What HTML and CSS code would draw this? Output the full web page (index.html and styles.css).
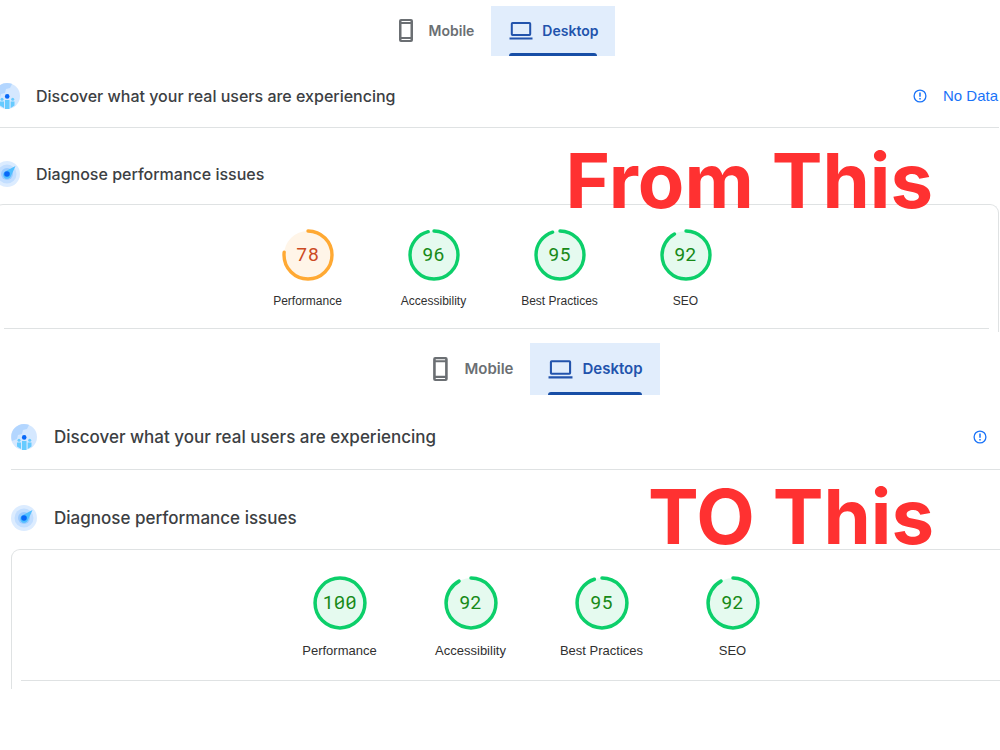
FILE: index.html
```
<!DOCTYPE html>
<html lang="en">
<head>
<meta charset="utf-8">
<meta name="viewport" content="width=device-width, initial-scale=1">
<title>PageSpeed comparison</title>
<link rel="stylesheet" href="styles.css">
</head>
<body>
<svg class="sprite" aria-hidden="true">
  <symbol id="phone" viewBox="0 0 24 24">
    <path d="M6 1h9a2 2 0 0 1 2 2v19a2 2 0 0 1-2 2H5a2 2 0 0 1-2-2V3a2 2 0 0 1 2-2zm-.5 5v13h9V6zm0-3v1h9V3zm0 18v1h9v-1z" fill="currentColor" fill-rule="evenodd"/>
  </symbol>
  <symbol id="laptop" viewBox="0 0 24 24">
    <path d="M3.500 4h17A1.700 1.700 0 0 1 22.200 5.700v10.600a1.700 1.700 0 0 1-1.700 1.700h-17a1.700 1.700 0 0 1-1.700-1.700V5.700A1.700 1.700 0 0 1 3.500 4zm.3 2v10h16.400V6zM.5 19.500h23v2H.5z" fill="currentColor" fill-rule="evenodd"/>
  </symbol>
  <symbol id="users" viewBox="0 0 26 26">
    <circle cx="13" cy="13" r="13" fill="#d5e8ff"/>
    <path d="M1 17C-2 8 5 0 13 0c3 0 5 1 5 1l-2 4-4 1-1 4-4 1-1 4z" fill="#b3d6ff"/>
    <path d="M6 18.500h4V25l-4-2.500zM11 17h4.500v9H11zM16.700 18.500h3.800v4L16.700 25z" fill="#67cbff"/>
    <circle cx="8" cy="16.300" r="1.500" fill="#67cbff"/><circle cx="18.700" cy="16.300" r="1.500" fill="#67cbff"/>
    <circle cx="13.200" cy="13.400" r="2.300" fill="#0868f7"/>
  </symbol>
  <symbol id="radar" viewBox="0 0 26 26">
    <circle cx="13" cy="13" r="13" fill="#dcecff"/>
    <circle cx="13" cy="13" r="9.500" fill="#c2deff"/>
    <circle cx="13" cy="13" r="6" fill="#9bcbff"/>
    <path d="M21.500 5 17 15a4 4 0 1 1-5-5z" fill="#50bfff"/>
    <circle cx="13" cy="13" r="2.800" fill="#0868f7"/>
  </symbol>
  <symbol id="info" viewBox="0 0 14 14">
    <circle cx="7" cy="7" r="5.900" fill="none" stroke="currentColor" stroke-width="1.300"/>
    <path d="M7 3.500v4.300M7 9v1.500" stroke="currentColor" stroke-width="1.500"/>
  </symbol>
</svg>
<main>
  <section class="report before">
    <nav class="tabs" aria-label="Device, before">
      <button class="tab"><svg class="tab-icon"><use href="#phone"/></svg>Mobile</button>
      <button class="tab active" aria-current="true"><svg class="tab-icon"><use href="#laptop"/></svg>Desktop</button>
    </nav>
    <div class="row discover">
      <svg class="row-icon"><use href="#users"/></svg>
      <h2>Discover what your real users are experiencing</h2>
      <a class="no-data" href="#"><svg class="info"><use href="#info"/></svg>No Data</a>
    </div>
    <div class="row diagnose">
      <svg class="row-icon"><use href="#radar"/></svg>
      <h2>Diagnose performance issues</h2>
    </div>
    <p class="caption">From This</p>
    <div class="card">
      <div class="gauges">
        <a class="gauge average" href="#"><span class="dial"><svg viewBox="0 0 52 52"><circle class="disc" cx="26" cy="26" r="24"/><circle class="arc" cx="26" cy="26" r="24" pathLength="100" stroke-dasharray="77 100"/></svg><span class="score">78</span></span>Performance</a>
        <a class="gauge" href="#"><span class="dial"><svg viewBox="0 0 52 52"><circle class="disc" cx="26" cy="26" r="24"/><circle class="arc" cx="26" cy="26" r="24" pathLength="100" stroke-dasharray="96 100"/></svg><span class="score">96</span></span>Accessibility</a>
        <a class="gauge" href="#"><span class="dial"><svg viewBox="0 0 52 52"><circle class="disc" cx="26" cy="26" r="24"/><circle class="arc" cx="26" cy="26" r="24" pathLength="100" stroke-dasharray="95 100"/></svg><span class="score">95</span></span>Best Practices</a>
        <a class="gauge" href="#"><span class="dial"><svg viewBox="0 0 52 52"><circle class="disc" cx="26" cy="26" r="24"/><circle class="arc" cx="26" cy="26" r="24" pathLength="100" stroke-dasharray="92 100"/></svg><span class="score">92</span></span>SEO</a>
      </div>
    </div>
  </section>
  <section class="report after">
    <nav class="tabs" aria-label="Device, after">
      <button class="tab"><svg class="tab-icon"><use href="#phone"/></svg>Mobile</button>
      <button class="tab active" aria-current="true"><svg class="tab-icon"><use href="#laptop"/></svg>Desktop</button>
    </nav>
    <div class="row discover">
      <svg class="row-icon"><use href="#users"/></svg>
      <h2>Discover what your real users are experiencing</h2>
      <a class="no-data" href="#" aria-label="Information"><svg class="info"><use href="#info"/></svg></a>
    </div>
    <div class="row diagnose">
      <svg class="row-icon"><use href="#radar"/></svg>
      <h2>Diagnose performance issues</h2>
    </div>
    <p class="caption">TO This</p>
    <div class="card">
      <div class="gauges">
        <a class="gauge" href="#"><span class="dial"><svg viewBox="0 0 52 52"><circle class="disc" cx="26" cy="26" r="24"/><circle class="arc" cx="26" cy="26" r="24"/></svg><span class="score">100</span></span>Performance</a>
        <a class="gauge" href="#"><span class="dial"><svg viewBox="0 0 52 52"><circle class="disc" cx="26" cy="26" r="24"/><circle class="arc" cx="26" cy="26" r="24" pathLength="100" stroke-dasharray="92 100"/></svg><span class="score">92</span></span>Accessibility</a>
        <a class="gauge" href="#"><span class="dial"><svg viewBox="0 0 52 52"><circle class="disc" cx="26" cy="26" r="24"/><circle class="arc" cx="26" cy="26" r="24" pathLength="100" stroke-dasharray="95 100"/></svg><span class="score">95</span></span>Best Practices</a>
        <a class="gauge" href="#"><span class="dial"><svg viewBox="0 0 52 52"><circle class="disc" cx="26" cy="26" r="24"/><circle class="arc" cx="26" cy="26" r="24" pathLength="100" stroke-dasharray="92 100"/></svg><span class="score">92</span></span>SEO</a>
      </div>
    </div>
  </section>
</main>
</body>
</html>
```
FILE: styles.css
```
* { box-sizing: border-box; }
body {
  margin: 0;
  background: #fff;
  color: #3c4043;
  font-family: Inter, "Liberation Sans", sans-serif;
}
main { overflow: hidden; }
.sprite { position: absolute; width: 0; height: 0; }
a { color: inherit; text-decoration: none; }

.report { position: relative; }
.before { margin-left: -6px; margin-right: 1px; padding-top: 6px; }
.after { margin: 11px -61px 0 11px; }

.tabs { display: flex; justify-content: center; }
.tab {
  position: relative;
  display: flex;
  align-items: center;
  gap: 9px;
  height: 50px;
  padding: 0 17px 2px 18px;
  border: 0;
  background: none;
  color: #6b6f73;
  font: 600 14px Inter, sans-serif;
}
.tab-icon { width: 24px; height: 24px; }
.tab.active { background: #e1edfc; color: #2253ac; }
.tab.active::after {
  content: "";
  position: absolute;
  right: 18px;
  bottom: 0;
  left: 18px;
  height: 3px;
  border-radius: 3px 3px 0 0;
  background: #174ea6;
}
.after .tab { height: 52px; font-size: 15px; }
.after .tab-icon { width: 25px; height: 25px; }

.row { display: flex; align-items: center; }
.row-icon { width: 26px; height: 26px; }
.row h2 { margin: 0; font-weight: 500; line-height: 24px; }
.before .row { gap: 16px; }
.after .row { gap: 17px; }
.before h2 { font-size: 16px; }
.after h2 { font-size: 17px; }
.discover { border-bottom: 1px solid #dfe2e3; }
.before .discover { height: 72px; padding-top: 8px; }
.before .diagnose { height: 76px; padding-top: 16px; }
.after .discover { height: 75px; padding-top: 9px; }
.after .diagnose { height: 79px; padding-top: 17px; }
.no-data {
  display: flex;
  align-items: center;
  gap: 16px;
  margin-left: auto;
  padding-right: 1px;
  color: #1a73f8;
  font: 15px "Liberation Sans", sans-serif;
}
.after .no-data { padding-right: 74px; }
.info { width: 14px; height: 14px; }

.caption {
  position: absolute;
  margin: 0;
  color: #ff3131;
  font: 700 76px/80px Inter, sans-serif;
}
.before .caption { top: 140px; right: 66px; }
.after .caption { top: 133px; right: 127px; }

.card { border: 1px solid #dfe2e3; border-bottom: 0; border-radius: 9px 9px 0 0; }
.before .card { padding: 0 9px 3px; }
.after .card { padding: 0 9px 8px; }
.gauges { display: flex; justify-content: center; border-bottom: 1px solid #dfe2e3; }
.gauge {
  display: flex;
  flex-direction: column;
  align-items: center;
  width: 126px;
  color: #303030;
  font: 12px/16px "Liberation Sans", sans-serif;
}
.before .gauge { gap: 12px; padding: 24px 0 19px; }
.after .gauge { width: 131px; gap: 13px; padding: 26px 0 21px; font-size: 13px; }
.dial { display: grid; place-items: center; width: 52px; height: 52px; }
.dial > * { grid-area: 1 / 1; }
.after .dial { width: 54px; height: 54px; }
.dial svg { width: 100%; height: 100%; }
.disc { fill: #e5faef; }
.arc {
  fill: none;
  stroke: #0ccf6a;
  stroke-width: 3.4;
  stroke-linecap: round;
  transform: rotate(-90deg);
  transform-origin: center;
}
.score {
  padding-bottom: 2px;
  color: #188a18;
  font: 400 19px/24px "Roboto Mono", Roboto, monospace;
  font-variant-numeric: slashed-zero;
}
.average .disc { fill: #fff5e8; }
.average .arc { stroke: #ffa933; }
.average .score { color: #cc4a22; }
```
